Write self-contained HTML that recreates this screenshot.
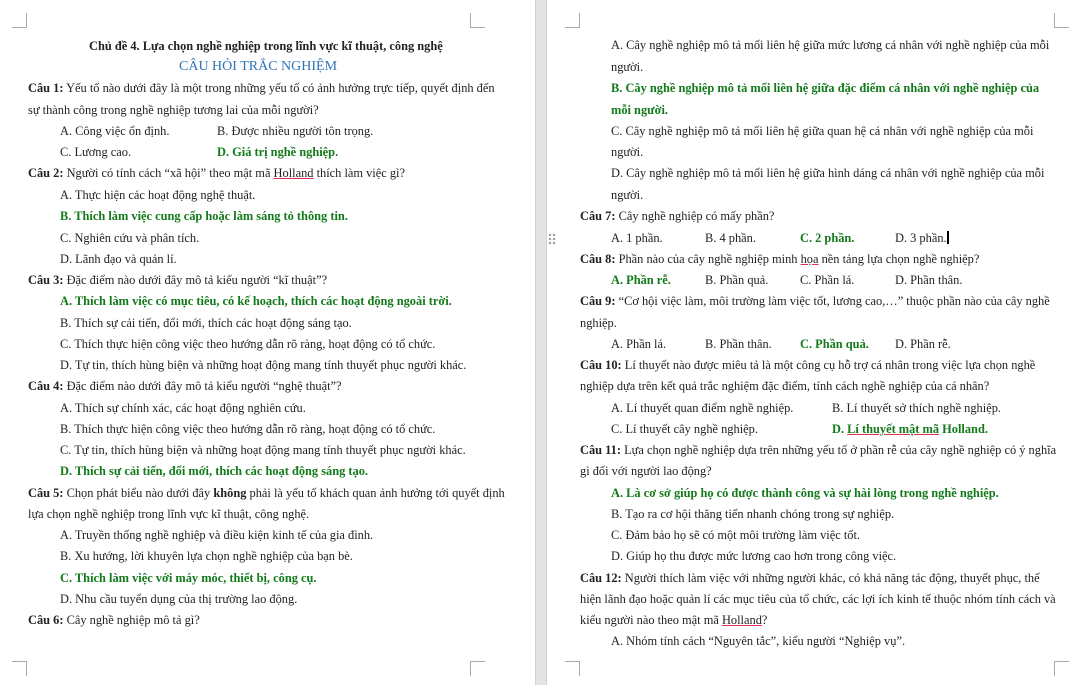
<!DOCTYPE html>
<html><head><meta charset="utf-8"><style>
*{margin:0;padding:0;box-sizing:border-box}
body{width:1074px;height:685px;overflow:hidden;background:#fff;position:relative;font-family:"Liberation Serif","Noto Serif CJK SC",serif;font-size:12.4px;color:#222}
.gap{position:absolute;left:535px;top:0;width:12px;height:685px;background:#e6e3e3;border-left:1px solid #d4d0d0;border-right:1px solid #d4d0d0}
.l{position:absolute;white-space:nowrap;line-height:16px}
b{font-weight:bold}
.g{color:#127a1a;font-weight:bold}
.u{text-decoration:underline;text-decoration-color:#e0305a}
.c{position:absolute;width:15px;height:15px;border-color:#aaa;border-style:solid;border-width:0}
.dots{position:absolute;left:547px;top:231px;width:10px;height:16px;background:#fff}
</style></head><body>
<div class="gap"></div>
<div class="dots"><svg width="10" height="16"><g fill="#999"><circle cx="3" cy="4" r="1.2"/><circle cx="7" cy="4" r="1.2"/><circle cx="3" cy="8" r="1.2"/><circle cx="7" cy="8" r="1.2"/><circle cx="3" cy="12" r="1.2"/><circle cx="7" cy="12" r="1.2"/></g></svg></div>
<div class="c" style="left:12px;top:13px;border-right-width:1px;border-bottom-width:1px"></div>
<div class="c" style="left:470px;top:13px;border-left-width:1px;border-bottom-width:1px"></div>
<div class="c" style="left:12px;top:661px;border-right-width:1px;border-top-width:1px"></div>
<div class="c" style="left:470px;top:661px;border-left-width:1px;border-top-width:1px"></div>
<div class="c" style="left:565px;top:13px;border-right-width:1px;border-bottom-width:1px"></div>
<div class="c" style="left:1054px;top:13px;border-left-width:1px;border-bottom-width:1px"></div>
<div class="c" style="left:565px;top:661px;border-right-width:1px;border-top-width:1px"></div>
<div class="c" style="left:1054px;top:661px;border-left-width:1px;border-top-width:1px"></div>

<div class="l" style="left:89px;top:38px"><b>Chủ đề 4. Lựa chọn nghề nghiệp trong lĩnh vực kĩ thuật, công nghệ</b></div>
<div class="l" style="left:179px;top:59px;color:#2e74b5;font-size:14px">CÂU HỎI TRẮC NGHIỆM</div>
<div class="l" style="left:28px;top:80px"><b>Câu 1:</b> Yếu tố nào dưới đây là một trong những yếu tố có ảnh hưởng trực tiếp, quyết định đến</div>
<div class="l" style="left:28px;top:102px">sự thành công trong nghề nghiệp tương lai của mỗi người?</div>
<div class="l" style="left:60px;top:123px">A. Công việc ổn định.</div><div class="l" style="left:217px;top:123px">B. Được nhiều người tôn trọng.</div>
<div class="l" style="left:60px;top:144px">C. Lương cao.</div><div class="l g" style="left:217px;top:144px">D. Giá trị nghề nghiệp.</div>
<div class="l" style="left:28px;top:165px"><b>Câu 2:</b> Người có tính cách “xã hội” theo mật mã <span class="u">Holland</span> thích làm việc gì?</div>
<div class="l" style="left:60px;top:187px">A. Thực hiện các hoạt động nghệ thuật.</div>
<div class="l g" style="left:60px;top:208px">B. Thích làm việc cung cấp hoặc làm sáng tỏ thông tin.</div>
<div class="l" style="left:60px;top:230px">C. Nghiên cứu và phân tích.</div>
<div class="l" style="left:60px;top:251px">D. Lãnh đạo và quản lí.</div>
<div class="l" style="left:28px;top:272px"><b>Câu 3:</b> Đặc điểm nào dưới đây mô tả kiểu người “kĩ thuật”?</div>
<div class="l g" style="left:60px;top:293px">A. Thích làm việc có mục tiêu, có kế hoạch, thích các hoạt động ngoài trời.</div>
<div class="l" style="left:60px;top:315px">B. Thích sự cải tiến, đổi mới, thích các hoạt động sáng tạo.</div>
<div class="l" style="left:60px;top:336px">C. Thích thực hiện công việc theo hướng dẫn rõ ràng, hoạt động có tổ chức.</div>
<div class="l" style="left:60px;top:357px">D. Tự tin, thích hùng biện và những hoạt động mang tính thuyết phục người khác.</div>
<div class="l" style="left:28px;top:378px"><b>Câu 4:</b> Đặc điểm nào dưới đây mô tả kiểu người “nghệ thuật”?</div>
<div class="l" style="left:60px;top:400px">A. Thích sự chính xác, các hoạt động nghiên cứu.</div>
<div class="l" style="left:60px;top:421px">B. Thích thực hiện công việc theo hướng dẫn rõ ràng, hoạt động có tổ chức.</div>
<div class="l" style="left:60px;top:442px">C. Tự tin, thích hùng biện và những hoạt động mang tính thuyết phục người khác.</div>
<div class="l g" style="left:60px;top:463px">D. Thích sự cải tiến, đổi mới, thích các hoạt động sáng tạo.</div>
<div class="l" style="left:28px;top:485px"><b>Câu 5:</b> Chọn phát biểu nào dưới đây <b>không</b> phải là yếu tố khách quan ảnh hưởng tới quyết định</div>
<div class="l" style="left:28px;top:506px">lựa chọn nghề nghiệp trong lĩnh vực kĩ thuật, công nghệ.</div>
<div class="l" style="left:60px;top:527px">A. Truyền thống nghề nghiệp và điều kiện kinh tế của gia đình.</div>
<div class="l" style="left:60px;top:548px">B. Xu hướng, lời khuyên lựa chọn nghề nghiệp của bạn bè.</div>
<div class="l g" style="left:60px;top:570px">C. Thích làm việc với máy móc, thiết bị, công cụ.</div>
<div class="l" style="left:60px;top:591px">D. Nhu cầu tuyển dụng của thị trường lao động.</div>
<div class="l" style="left:28px;top:612px"><b>Câu 6:</b> Cây nghề nghiệp mô tả gì?</div>

<div class="l" style="left:611px;top:37px">A. Cây nghề nghiệp mô tả mối liên hệ giữa mức lương cá nhân với nghề nghiệp của mỗi</div>
<div class="l" style="left:611px;top:59px">người.</div>
<div class="l g" style="left:611px;top:80px">B. Cây nghề nghiệp mô tả mối liên hệ giữa đặc điểm cá nhân với nghề nghiệp của</div>
<div class="l g" style="left:611px;top:102px">mỗi người.</div>
<div class="l" style="left:611px;top:123px">C. Cây nghề nghiệp mô tả mối liên hệ giữa quan hệ cá nhân với nghề nghiệp của mỗi</div>
<div class="l" style="left:611px;top:144px">người.</div>
<div class="l" style="left:611px;top:165px">D. Cây nghề nghiệp mô tả mối liên hệ giữa hình dáng cá nhân với nghề nghiệp của mỗi</div>
<div class="l" style="left:611px;top:187px">người.</div>
<div class="l" style="left:580px;top:208px"><b>Câu 7:</b> Cây nghề nghiệp có mấy phần?</div>
<div class="l" style="left:611px;top:230px">A. 1 phần.</div><div class="l" style="left:705px;top:230px">B. 4 phần.</div><div class="l g" style="left:800px;top:230px">C. 2 phần.</div><div class="l" style="left:895px;top:230px">D. 3 phần.<span style="display:inline-block;width:2px;height:13px;background:#000;vertical-align:-2px"></span></div>
<div class="l" style="left:580px;top:251px"><b>Câu 8:</b> Phần nào của cây nghề nghiệp minh <span class="u">họa</span> nền tảng lựa chọn nghề nghiệp?</div>
<div class="l g" style="left:611px;top:272px">A. Phần rễ.</div><div class="l" style="left:705px;top:272px">B. Phần quả.</div><div class="l" style="left:800px;top:272px">C. Phần lá.</div><div class="l" style="left:895px;top:272px">D. Phần thân.</div>
<div class="l" style="left:580px;top:293px"><b>Câu 9:</b> “Cơ hội việc làm, môi trường làm việc tốt, lương cao,…” thuộc phần nào của cây nghề</div>
<div class="l" style="left:580px;top:315px">nghiệp.</div>
<div class="l" style="left:611px;top:336px">A. Phần lá.</div><div class="l" style="left:705px;top:336px">B. Phần thân.</div><div class="l g" style="left:800px;top:336px">C. Phần quả.</div><div class="l" style="left:895px;top:336px">D. Phần rễ.</div>
<div class="l" style="left:580px;top:357px"><b>Câu 10:</b> Lí thuyết nào được miêu tả là một công cụ hỗ trợ cá nhân trong việc lựa chọn nghề</div>
<div class="l" style="left:580px;top:378px">nghiệp dựa trên kết quả trắc nghiệm đặc điểm, tính cách nghề nghiệp của cá nhân?</div>
<div class="l" style="left:611px;top:400px">A. Lí thuyết quan điểm nghề nghiệp.</div><div class="l" style="left:832px;top:400px">B. Lí thuyết sở thích nghề nghiệp.</div>
<div class="l" style="left:611px;top:421px">C. Lí thuyết cây nghề nghiệp.</div><div class="l g" style="left:832px;top:421px">D. <span class="u">Lí thuyết mật mã</span> Holland.</div>
<div class="l" style="left:580px;top:442px"><b>Câu 11:</b> Lựa chọn nghề nghiệp dựa trên những yếu tố ở phần rễ của cây nghề nghiệp có ý nghĩa</div>
<div class="l" style="left:580px;top:463px">gì đối với người lao động?</div>
<div class="l g" style="left:611px;top:485px">A. Là cơ sở giúp họ có được thành công và sự hài lòng trong nghề nghiệp.</div>
<div class="l" style="left:611px;top:506px">B. Tạo ra cơ hội thăng tiến nhanh chóng trong sự nghiệp.</div>
<div class="l" style="left:611px;top:527px">C. Đảm bảo họ sẽ có một môi trường làm việc tốt.</div>
<div class="l" style="left:611px;top:548px">D. Giúp họ thu được mức lương cao hơn trong công việc.</div>
<div class="l" style="left:580px;top:570px"><b>Câu 12:</b> Người thích làm việc với những người khác, có khả năng tác động, thuyết phục, thể</div>
<div class="l" style="left:580px;top:591px">hiện lãnh đạo hoặc quản lí các mục tiêu của tổ chức, các lợi ích kinh tế thuộc nhóm tính cách và</div>
<div class="l" style="left:580px;top:612px">kiểu người nào theo mật mã <span class="u">Holland</span>?</div>
<div class="l" style="left:611px;top:633px">A. Nhóm tính cách “Nguyên tắc”, kiểu người “Nghiệp vụ”.</div>
</body></html>
